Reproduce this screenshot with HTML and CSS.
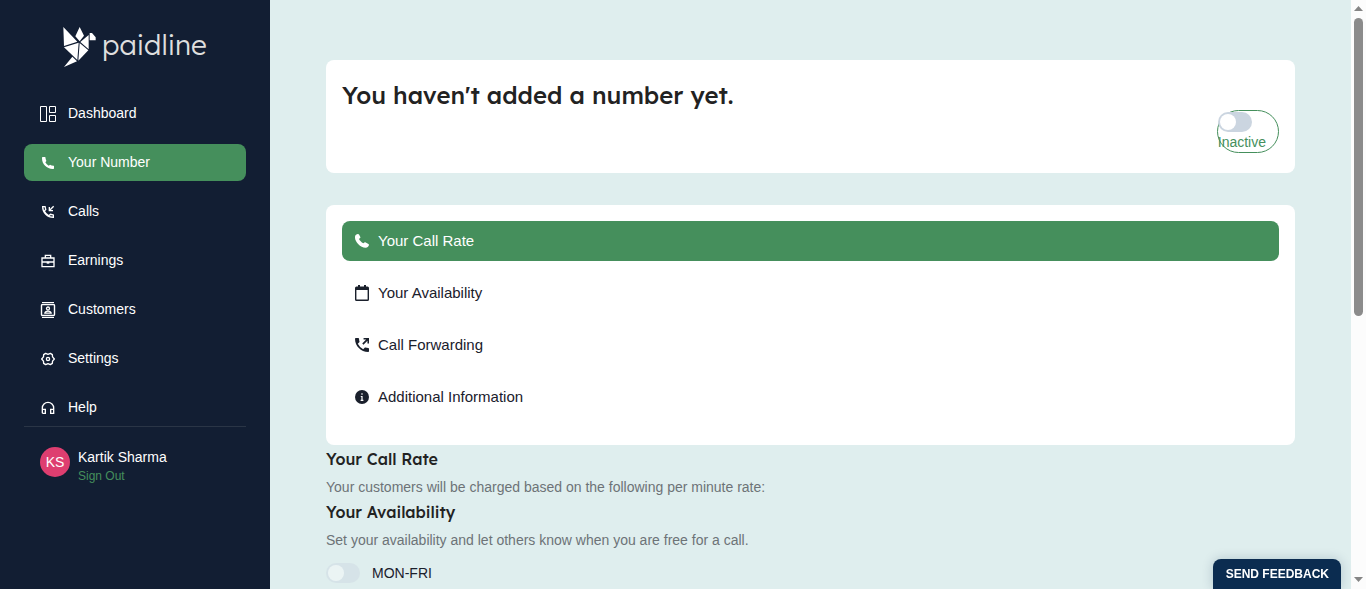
FILE: index.html
```html
<!DOCTYPE html>
<html lang="en">
<head>
<meta charset="utf-8">
<title>Paidline - Your Number</title>
<link rel="stylesheet" href="styles.css">
</head>
<body>
<div class="app">
  <aside class="sidebar">
    <a class="logo" href="#">
      <svg class="logo-mark" viewBox="40 38 99 120" fill="#fff" aria-hidden="true">
        <path d="M41 38 83 82 43 95ZM90 38 103 64 90 81 77 66ZM117 62V105L92 83ZM120 56H127L138 69V78H120ZM43 99 87 85 83 137ZM90 86 116 108 86 139ZM68 127 82 141 43 158Z"/>
      </svg>
      <span>paidline</span>
    </a>
    <nav class="nav">
      <a class="nav-item" href="#">
        <svg class="icon" viewBox="0 0 16 16" fill="none" stroke="currentColor"><path d="M.5.5h6v15h-6zM9.500.5h6v6h-6zM9.500 9.500h6v6h-6z"/></svg>
        <span>Dashboard</span>
      </a>
      <a class="nav-item active" href="#">
        <svg class="icon" viewBox="0 0 24 24" fill="currentColor"><path d="M21 16.420v3.536a1 1 0 0 1-.93.998c-.437.03-.794.046-1.070.046C10.163 21 3 13.837 3 5c0-.276.015-.633.046-1.070A1 1 0 0 1 4.044 3H7.580a.5.5 0 0 1 .498.450c.23 2.280.7 4.040 1.500 5.500L8 11a14 14 0 0 0 5.200 5.100l1.850-1.650c1.460.79 3.220 1.300 5.500 1.520a.5.5 0 0 1 .45.45z"/></svg>
        <span>Your Number</span>
      </a>
      <a class="nav-item" href="#">
        <svg class="icon" viewBox="0 0 24 24" fill="none" stroke="currentColor" stroke-width="2"><path d="M4 4h3.600l1 4.200-2.300 2.500a15 15 0 0 0 7 7l2.500-2.300 4.200 1V20C11 20 4 13 4 4zM20.500 3.500l-6 6M14 4.500V10h5.500"/></svg>
        <span>Calls</span>
      </a>
      <a class="nav-item" href="#">
        <svg class="icon" viewBox="0 0 24 24" fill="none" stroke="currentColor" stroke-width="2"><path d="M3 7.500h18V20.500H3zM8 7V3.500h8V7M3 13.500h18"/><path d="M10 14.500h4" stroke-width="3"/></svg>
        <span>Earnings</span>
      </a>
      <a class="nav-item" href="#">
        <svg class="icon" viewBox="0 0 16 16" fill="none" stroke="currentColor"><path d="M2 .5h12M2 15.500h12"/><rect x="1.500" y="2.500" width="13" height="11" rx="1" stroke-width="1.400"/><circle cx="8" cy="6.500" r="1.500" stroke-width="1.300"/><path d="M4.800 11.200c.4-2.800 6-2.800 6.400 0z" stroke-width="1.200"/></svg>
        <span>Customers</span>
      </a>
      <a class="nav-item" href="#">
        <svg class="icon" viewBox="0 0 24 24" fill="none" stroke="currentColor" stroke-width="2" stroke-linejoin="round"><path d="M8.500 3.500 12 5l3.500-1.500 3 2 .3 3.300L21.500 12l-2.700 3.200-.3 3.300-3 2L12 19l-3.500 1.500-3-2-.3-3.300L2.500 12l2.700-3.200.3-3.300z"/><circle cx="12" cy="12" r="2.400"/></svg>
        <span>Settings</span>
      </a>
      <a class="nav-item" href="#">
        <svg class="icon" viewBox="0 0 24 24" fill="none" stroke="currentColor" stroke-width="2"><path d="M3.500 20v-8a8.500 8.500 0 0 1 17 0v8H16v-6h4.500M3.500 14H8v6H3.500"/></svg>
        <span>Help</span>
      </a>
    </nav>
    <div class="profile">
      <span class="avatar">KS</span>
      <div class="profile-text">
        <span class="profile-name">Kartik Sharma</span>
        <a class="sign-out" href="#">Sign Out</a>
      </div>
    </div>
  </aside>

  <main class="main">
    <section class="card number-card">
      <h1>You haven't added a number yet.</h1>
      <label class="status">
        <input class="switch" type="checkbox" role="switch">
        <span>Inactive</span>
      </label>
    </section>

    <nav class="card menu">
      <a class="menu-item active" href="#rate">
        <svg class="icon-small" viewBox="0 0 14 14" fill="currentColor"><path d="M1.400.6 2.700.1c.5-.2 1 0 1.300.5l1.200 2.200c.3.5.2 1-.2 1.300l-1 .9c.8 1.700 2.300 3.200 4.400 4.300l1-.8c.4-.4.9-.4 1.300-.1l2.700 1.500c.6.4.7.9.5 1.400-.6 1.500-1.700 2.500-3.300 2.400C5.100 13.500-.2 7.500 0 3.200.1 1.900.4 1 1.400.6z"/></svg>
        <span>Your Call Rate</span>
      </a>
      <a class="menu-item" href="#availability">
        <svg class="icon-small" viewBox="0 0 14 16" fill="currentColor"><path fill-rule="evenodd" d="M3 0h2v1.500h4V0h2v1.500h1.500A1.500 1.500 0 0 1 14 3v11.500a1.500 1.500 0 0 1-1.500 1.500h-11A1.500 1.500 0 0 1 0 14.500V3a1.500 1.500 0 0 1 1.500-1.500H3zM1.400 5v9.600h11.200V5z"/></svg>
        <span>Your Availability</span>
      </a>
      <a class="menu-item" href="#forwarding">
        <svg class="icon-small" viewBox="3 3 18 18" fill="currentColor"><path d="M20 15.800c-1.250 0-2.450-.2-3.570-.57-.35-.11-.74-.03-1.020.24l-1.900 1.900a15.100 15.100 0 0 1-6.890-6.880l1.900-1.910c.28-.27.36-.66.250-1.010A11.400 11.400 0 0 1 8.200 4c0-.55-.45-1-1-1H4c-.55 0-1 .45-1 1 0 9.390 7.610 17 17 17 .55 0 1-.45 1-1v-3.200c0-.55-.45-1-1-1z"/><path d="M14 3v2h3.300l-5 5 1.600 1.600 5.100-5.100V10h2V3z"/></svg>
        <span>Call Forwarding</span>
      </a>
      <a class="menu-item" href="#information">
        <svg class="icon-small" viewBox="0 0 14 14"><circle cx="7" cy="7" r="7" fill="currentColor"/><path d="M7 3.300v1.500M5.800 6.500H7v3.800M5.600 10.300h2.800" fill="none" stroke="#fff" stroke-width="1.200"/></svg>
        <span>Additional Information</span>
      </a>
    </nav>

    <section class="block" id="rate">
      <h2>Your Call Rate</h2>
      <p>Your customers will be charged based on the following per minute rate:</p>
    </section>
    <section class="block" id="availability">
      <h2>Your Availability</h2>
      <p>Set your availability and let others know when you are free for a call.</p>
      <label class="day">
        <input class="switch" type="checkbox" role="switch" disabled>
        <span>MON-FRI</span>
      </label>
    </section>
  </main>

  <div class="scrollbar" aria-hidden="true">
    <svg viewBox="0 0 9 5" fill="#858585"><path d="M0 5 4.500 0 9 5z"/></svg>
    <div class="scroll-track"><div class="scroll-thumb"></div></div>
    <svg viewBox="0 0 9 5" fill="#858585"><path d="M0 0h9L4.500 5z"/></svg>
  </div>
</div>
<button class="feedback" type="button">SEND FEEDBACK</button>
</body>
</html>
```
FILE: styles.css
```css
* { box-sizing: border-box; }

body {
  margin: 0;
  font: 14px/20px "Liberation Sans", Arial, sans-serif;
  color: #1a202c;
  background: #dfeeee;
}

a { color: inherit; text-decoration: none; }
h1, h2, p { margin: 0; }
h1, h2 { font-family: Lexend, Inter, sans-serif; font-weight: 500; color: #222; }

.app {
  display: grid;
  grid-template-columns: 270px minmax(0, 1fr) 15px;
  height: 100vh;
}

/* Sidebar */
.sidebar { padding: 24px; background: #121e33; color: #fff; }

.logo {
  display: flex;
  align-items: center;
  gap: 6px;
  height: 46px;
  padding-left: 39px;
  font: 300 28px/40px Lexend, Lato, sans-serif;
  color: #dedede;
}
.logo span { padding-bottom: 4px; }
.logo-mark { width: 33px; height: 40px; }

.nav {
  display: flex;
  flex-direction: column;
  gap: 12px;
  margin-top: 25px;
  border-bottom: 1px solid #2a3546;
}
.nav-item {
  display: flex;
  align-items: center;
  gap: 12px;
  height: 37px;
  padding: 0 16px;
  border-radius: 8px;
}
.nav-item span { padding-bottom: 2px; }
.icon { width: 16px; height: 16px; flex: none; }
.active { background: #458f5c; color: #fff; }

.profile { display: flex; gap: 8px; padding: 20px 16px; }
.avatar {
  width: 30px;
  height: 30px;
  border-radius: 50%;
  background: #de3e70;
  line-height: 30px;
  text-align: center;
}
.profile-text { display: flex; flex-direction: column; }
.sign-out { font-size: 12px; line-height: 18px; color: #458f5c; }

/* Content */
.main { padding: 60px 56px 0; overflow: hidden; }
.card { padding: 16px; border-radius: 8px; background: #fff; }

.number-card { display: flex; flex-direction: column; padding: 20px 16px; }
.number-card h1 { font-size: 24px; line-height: 30px; }
.status {
  display: flex;
  flex-direction: column;
  align-self: flex-end;
  padding: 1px 12px 0 0;
  border: 1px solid #458f5c;
  border-radius: 24px;
  color: #458f5c;
}

.switch {
  appearance: none;
  width: 34px;
  height: 20px;
  margin: 0;
  padding: 2px;
  border-radius: 10px;
  background: #cbd5e0;
}
.switch::before {
  content: "";
  display: block;
  width: 16px;
  height: 16px;
  border-radius: 50%;
  background: #fff;
}
.switch:disabled { opacity: 0.4; }

.menu { display: flex; flex-direction: column; gap: 12px; margin-top: 32px; padding-bottom: 28px; }
.menu-item {
  display: flex;
  align-items: center;
  gap: 9px;
  height: 40px;
  padding: 0 13px;
  border-radius: 8px;
  font-size: 15px;
}
.icon-small { width: 14px; height: 16px; flex: none; }

.block { padding-top: 3px; }
.block h2 { font-size: 16px; line-height: 22px; }
.block p { margin-top: 6px; font-size: 14px; line-height: 22px; color: #6d7377; }
.day { display: flex; align-items: center; gap: 12px; margin-top: 12px; }

/* Scrollbar */
.scrollbar {
  display: flex;
  flex-direction: column;
  align-items: center;
  gap: 7px;
  padding: 6px 0 7px;
  background: #fcfcfc;
}
.scrollbar svg { width: 9px; height: 5px; }
.scroll-track { flex: 1; width: 9px; }
.scroll-thumb { height: 54%; border-radius: 5px; background: #8b8b8b; }

.feedback {
  position: fixed;
  right: 25px;
  bottom: 0;
  height: 30px;
  padding: 0 12px 0 13px;
  border: 0;
  border-radius: 8px 8px 0 0;
  background: #0b2c50;
  color: #fff;
  font: bold 12px/30px "Liberation Sans", Arial, sans-serif;
  box-shadow: 0 0 12px rgba(11, 44, 80, 0.2);
}
```
